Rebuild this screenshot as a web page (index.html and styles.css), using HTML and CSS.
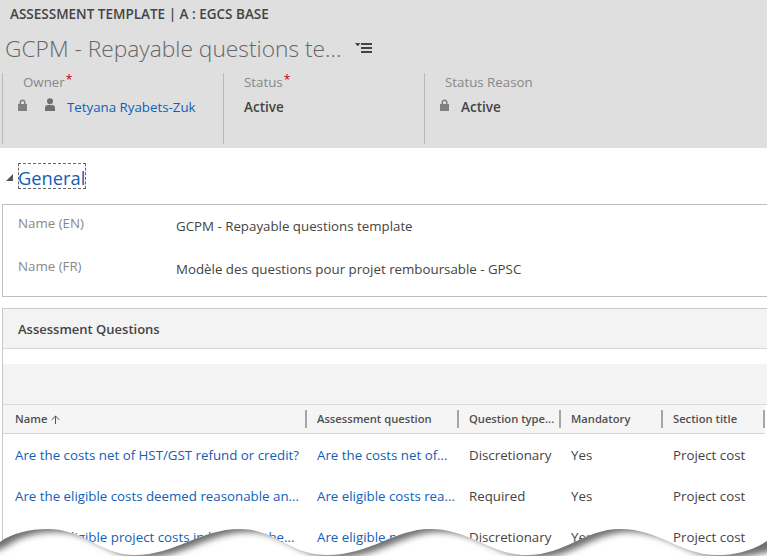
FILE: index.html
```html
<!DOCTYPE html>
<html lang="en">
<head>
    <meta charset="UTF-8">
    <meta name="viewport" content="width=device-width, initial-scale=1.0">
    <title>Assessment Template</title>
    <link rel="stylesheet" href="styles.css">
</head>
<body>
    <div class="header">
        <div class="entity">ASSESSMENT TEMPLATE | A : EGCS BASE</div>
        <div class="record">
            <h1>GCPM - Repayable questions te...</h1>
            <svg class="menu-icon" width="18" height="10" viewBox="0 0 18 10">
                <path d="M0 0h5.500L3.400 2.400V3H2.100v-.6z" fill="#444"/>
                <path d="M6 0h11v2H6zM6 4h11v2H6zM6 8h11v2H6z" fill="#444"/>
            </svg>
        </div>
        <div class="fields">
            <div class="field owner">
                <div class="label">Owner<span class="req">*</span></div>
                <div class="value">
                    <svg class="lock" width="9" height="12" viewBox="0 0 9 12">
                        <path d="M1.500 5V3.500a3 3 0 0 1 6 0V5H9v7H0V5zM3 5h3V3.500a1.500 1.500 0 0 0-3 0z" fill="#808080"/>
                    </svg>
                    <svg class="person" width="10" height="13" viewBox="0 0 10 13">
                        <circle cx="5" cy="3.200" r="3" fill="#707070"/>
                        <path d="M0 13v-3.500C0 7.800 1.500 7 3 7h4c1.500 0 3 .8 3 2.500V13z" fill="#707070"/>
                    </svg>
                    <a href="#">Tetyana Ryabets-Zuk</a>
                </div>
            </div>
            <div class="field status">
                <div class="label">Status<span class="req">*</span></div>
                <div class="value"><b>Active</b></div>
            </div>
            <div class="field reason">
                <div class="label">Status Reason</div>
                <div class="value">
                    <svg class="lock" width="9" height="12" viewBox="0 0 9 12">
                        <path d="M1.500 5V3.500a3 3 0 0 1 6 0V5H9v7H0V5zM3 5h3V3.500a1.500 1.500 0 0 0-3 0z" fill="#808080"/>
                    </svg>
                    <b>Active</b>
                </div>
            </div>
        </div>
    </div>

    <div class="section-title">
        <svg width="7" height="7" viewBox="0 0 7 7"><path d="M7 0v7H0z" fill="#555"/></svg>
        <a href="#">General</a>
    </div>

    <div class="form-box">
        <div class="form-row">
            <div class="form-label">Name (EN)</div>
            <div class="form-value">GCPM - Repayable questions template</div>
        </div>
        <div class="form-row">
            <div class="form-label">Name (FR)</div>
            <div class="form-value">Modèle des questions pour projet remboursable - GPSC</div>
        </div>
    </div>

    <div class="grid-box">
        <div class="grid-title">Assessment Questions</div>
        <div class="grid-toolbar"></div>
        <div class="grid">
            <div class="th"><div>Name<svg class="sort" width="9" height="9" viewBox="0 0 9 9"><path d="M4.500 9V1M.7 4.800l3.800-3.800 3.800 3.800" fill="none" stroke="#555"/></svg></div></div>
            <div class="th"><div>Assessment question</div></div>
            <div class="th"><div>Question type...</div></div>
            <div class="th"><div>Mandatory</div></div>
            <div class="th"><div>Section title</div></div>

            <div class="td"><a href="#">Are the costs net of HST/GST refund or credit?</a></div>
            <div class="td"><a href="#">Are the costs net of...</a></div>
            <div class="td">Discretionary</div>
            <div class="td">Yes</div>
            <div class="td">Project cost</div>

            <div class="td"><a href="#">Are the eligible costs deemed reasonable an...</a></div>
            <div class="td"><a href="#">Are eligible costs rea...</a></div>
            <div class="td">Required</div>
            <div class="td">Yes</div>
            <div class="td">Project cost</div>

            <div class="td"><a href="#">Are the eligible project costs in line with the...</a></div>
            <div class="td"><a href="#">Are eligible project...</a></div>
            <div class="td">Discretionary</div>
            <div class="td">Yes</div>
            <div class="td">Project cost</div>
        </div>
    </div>

    <svg class="torn" width="767" height="40" viewBox="0 516 767 40">
        <defs>
            <clipPath id="below">
                <path d="M0 542C12 533 30 529 47 529C85 529 100 555 135 555C175 555 200 529 240 529C275 529 290 555 327 555C370 555 395 529 430 529C470 529 490 555 527 555C565 555 585 529 620 529C660 529 680 555 717 555C735 555 752 551 767 541V556H0z"/>
            </clipPath>
            <filter id="soft" x="-5%" y="-50%" width="110%" height="200%">
                <feGaussianBlur stdDeviation="3"/>
            </filter>
        </defs>
        <path d="M0 542C12 533 30 529 47 529C85 529 100 555 135 555C175 555 200 529 240 529C275 529 290 555 327 555C370 555 395 529 430 529C470 529 490 555 527 555C565 555 585 529 620 529C660 529 680 555 717 555C735 555 752 551 767 541V556H0z" fill="#fff"/>
        <g clip-path="url(#below)">
            <path d="M-20 500H790V541C752 551 735 555 717 555C680 555 660 529 620 529C585 529 565 555 527 555C490 555 470 529 430 529C395 529 370 555 327 555C290 555 275 529 240 529C200 529 175 555 135 555C100 555 85 529 47 529C30 529 12 533 0 542L-20 552z" fill="#707070" filter="url(#soft)" transform="translate(9 3)"/>
        </g>
    </svg>
</body>
</html>
```

FILE: styles.css
```css
html, body {
    margin: 0;
    height: 100%;
}
body {
    position: relative;
    height: 556px;
    overflow: hidden;
    background: #fff;
    font-family: 'Open Sans', 'Noto Sans', sans-serif;
    font-size: 13.3px;
    color: #444;
}
a {
    color: #1160b7;
    text-decoration: none;
}
.header {
    height: 148px;
    background: #dfdfdf;
}
.entity {
    height: 28px;
    padding-left: 10px;
    line-height: 28px;
    font-size: 13.5px;
    font-weight: 600;
    color: #444;
}
.record {
    display: flex;
    align-items: center;
    height: 40px;
    padding-left: 5px;
}
.record h1 {
    margin: 0;
    width: 350px;
    font-size: 22.75px;
    font-weight: 300;
    color: #666;
    white-space: nowrap;
}
.menu-icon {
    flex: none;
}
.fields {
    display: flex;
    margin: 5px 0 0 2px;
}
.field {
    height: 71px;
    border-left: 1px solid #b9b9b9;
    box-sizing: border-box;
}
.owner { width: 221px; }
.status { width: 201px; }
.label {
    height: 18px;
    padding-left: 20px;
    line-height: 18px;
    color: #888;
}
.req {
    margin-left: 1px;
    color: #c00000;
    font-size: 12px;
    line-height: 0;
    vertical-align: 3px;
}
.value {
    display: flex;
    align-items: center;
    height: 18px;
    margin-top: 7px;
    padding-left: 15px;
}
.value .lock { margin-top: -5px; }
.value .person { margin: -5px 12px 0 18px; }
.status .value { padding-left: 20px; }
.reason .value .lock { margin-right: 12px; }
.value b {
    font-size: 13.5px;
    font-weight: 600;
    color: #444;
}
.section-title {
    display: flex;
    align-items: center;
    margin-top: 15px;
    padding-left: 6px;
}
.section-title svg {
    margin: 3px 5px 0 0;
}
.section-title a {
    box-sizing: border-box;
    width: 68px;
    height: 26px;
    border: 1px dashed #666;
    font-size: 18.3px;
    line-height: 27px;
    text-indent: -1px;
    white-space: nowrap;
}
.form-box {
    box-sizing: border-box;
    height: 93px;
    margin: 15px 0 0 2px;
    border: solid #bcc0c0;
    border-width: 1px 0 1px 1px;
}
.form-row {
    display: flex;
    height: 43px;
    padding: 9px 0 0 15px;
    box-sizing: border-box;
}
.form-label {
    width: 158px;
    line-height: 18px;
    color: #888;
}
.form-value {
    margin-top: 3px;
    line-height: 18px;
}
.grid-box {
    margin: 11px 0 0 2px;
    border: solid #c8cbcb;
    border-width: 1px 0 0 1px;
}
.grid-title {
    box-sizing: border-box;
    height: 40px;
    padding-left: 15px;
    line-height: 41px;
    background: #f3f3f3;
    border-bottom: 1px solid #d9d9d9;
    font-size: 13px;
    font-weight: 600;
    color: #444;
}
.grid-toolbar {
    height: 40px;
    margin-top: 15px;
    background: #f3f3f3;
    border-bottom: 1px solid #d9d9d9;
}
.grid {
    display: grid;
    grid-template-columns: 304px 152px 102px 102px 102px;
    grid-auto-rows: 41px;
}
.th {
    box-sizing: border-box;
    height: 29px;
    margin-bottom: 12px;
    padding: 5px 0;
    background: #f5f5f5;
    border-bottom: 1px solid #d4d4d4;
    font-size: 11.2px;
    font-weight: 600;
    color: #505050;
}
.th div {
    height: 18px;
    padding-left: 10px;
    line-height: 18px;
    border-right: 2px solid #a6a6a6;
    white-space: nowrap;
}
.th:first-child div { padding-left: 12px; }
.sort {
    margin-left: 4px;
    vertical-align: -1px;
}
.td {
    margin-top: -11px;
    padding-left: 10px;
    line-height: 41px;
    white-space: nowrap;
    overflow: hidden;
}
.td:nth-child(5n+1) { padding-left: 12px; }
.torn {
    display: block;
    position: absolute;
    left: 0;
    bottom: 0;
}
```
